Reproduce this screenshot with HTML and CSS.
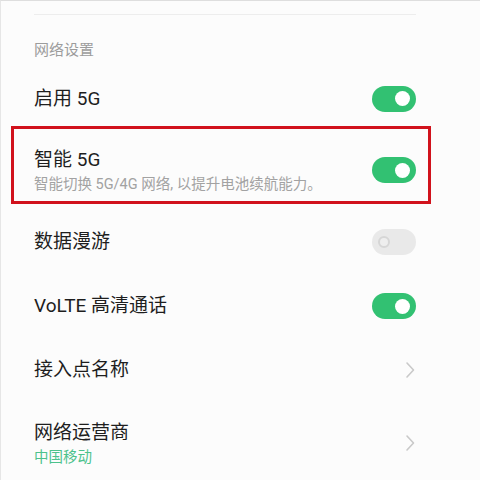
FILE: index.html
```html
<!DOCTYPE html>
<html lang="zh-CN">
<head>
<meta charset="utf-8">
<title>网络设置</title>
<link rel="stylesheet" href="styles.css">
</head>
<body>
<div class="screen">
  <div class="divider"></div>
  <div class="section-title">网络设置</div>

  <div class="row first">
    <span class="label">启用 5G</span>
    <span class="switch on"><span class="knob"></span></span>
  </div>

  <div class="row highlight">
    <div class="text">
      <div class="label">智能 5G</div>
      <div class="desc">智能切换 5G/4G 网络, 以提升电池续航能力。</div>
    </div>
    <span class="switch on top"><span class="knob"></span></span>
  </div>

  <div class="row plain spaced">
    <span class="label">数据漫游</span>
    <span class="switch off"><span class="knob"></span></span>
  </div>

  <div class="row plain">
    <span class="label">VoLTE 高清通话</span>
    <span class="switch on"><span class="knob"></span></span>
  </div>

  <div class="row plain">
    <span class="label">接入点名称</span>
    <svg class="chevron" width="10" height="18" viewBox="0 0 10 18"><polyline points="2,2 8.5,9 2,16" fill="none" stroke="#c9c9c9" stroke-width="1.6" stroke-linecap="round" stroke-linejoin="round"/></svg>
  </div>

  <div class="row operator">
    <div class="text">
      <div class="label">网络运营商</div>
      <div class="desc green">中国移动</div>
    </div>
    <svg class="chevron up" width="10" height="18" viewBox="0 0 10 18"><polyline points="2,2 8.5,9 2,16" fill="none" stroke="#c9c9c9" stroke-width="1.6" stroke-linecap="round" stroke-linejoin="round"/></svg>
  </div>
</div>
</body>
</html>
```

FILE: styles.css
```css
html, body {
  margin: 0;
  padding: 0;
  background: #fcfcfc;
}

body {
  width: 480px;
  height: 480px;
  overflow: hidden;
  font-family: Roboto, "Noto Sans CJK SC", sans-serif;
  color: #1e1e1e;
}

.screen {
  box-sizing: border-box;
  width: 480px;
  height: 480px;
  border-top: 1px solid #dedede;
  border-left: 1px solid #e6e6e6;
  padding: 13px 64px 0 33px;
  background: #fcfcfc;
}

.divider {
  height: 1px;
  background: #ededed;
}

.section-title {
  padding: 25px 0 11px 0;
  font-size: 15px;
  line-height: 20px;
  color: #9c9c9c;
}

.row {
  display: flex;
  align-items: center;
  justify-content: space-between;
}

.row.first {
  height: 55px;
}

.row.plain {
  height: 64px;
}

.row.spaced {
  margin-top: 6px;
}

.label {
  font-size: 19px;
  line-height: 22px;
  color: #1e1e1e;
}

.desc {
  margin-top: 5px;
  font-size: 14.5px;
  line-height: 18px;
  color: #a2a2a2;
}

.desc.green {
  color: #4cc28c;
}

.highlight {
  margin: 0 -15px 0 -23px;
  border: 3px solid #d1121c;
  padding: 20px 12px 7px 20px;
  align-items: flex-start;
}

.operator {
  padding-top: 20px;
}

.switch {
  position: relative;
  flex: none;
  width: 44px;
  height: 26px;
  border-radius: 13px;
}

.switch.top {
  margin-top: 8px;
}

.switch.on {
  background: #32c172;
}

.switch.off {
  background: #e9e9e9;
}

.switch .knob {
  position: absolute;
  top: 5.5px;
  width: 15px;
  height: 15px;
  border-radius: 50%;
  box-sizing: border-box;
}

.switch.on .knob {
  right: 6px;
  background: #ffffff;
}

.switch.off .knob {
  left: 6px;
  top: 7px;
  width: 12px;
  height: 12px;
  border: 2px solid #d6d6d6;
  background: #eeeeee;
}

.chevron {
  flex: none;
  margin-right: 1px;
}

.chevron.up {
  margin-bottom: 4px;
}
```
